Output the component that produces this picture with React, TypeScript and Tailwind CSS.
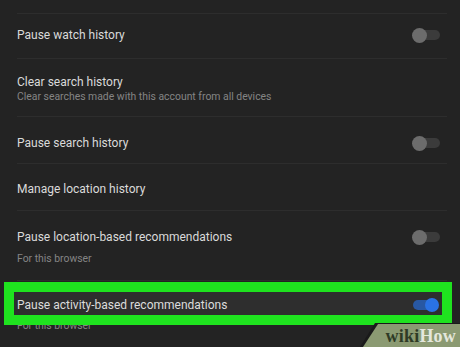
import React from "react";

type Row = {
  title: string;
  subtitle?: string;
  toggle?: "off" | "on";
  height: string;
  pad: string;
  gap?: string;
  last?: boolean;
};

const rows: Row[] = [
  { title: "Pause watch history", toggle: "off", height: "h-[45px]", pad: "pt-[13px]" },
  {
    title: "Clear search history",
    subtitle: "Clear searches made with this account from all devices",
    height: "h-[58px]",
    pad: "pt-[15px]",
    gap: "mt-0",
  },
  { title: "Pause search history", toggle: "off", height: "h-[47px]", pad: "pt-[18px]" },
  { title: "Manage location history", height: "h-[47px]", pad: "pt-[17px]" },
  {
    title: "Pause location-based recommendations",
    subtitle: "For this browser",
    toggle: "off",
    height: "h-[70px]",
    pad: "pt-[18px]",
    gap: "mt-[7px]",
  },
  {
    title: "Pause activity-based recommendations",
    subtitle: "For this browser",
    toggle: "on",
    height: "h-[67px]",
    pad: "pt-[16px]",
    gap: "mt-[6px]",
    last: true,
  },
];

const Toggle = ({ on }: { on: boolean }) => {
  if (on) {
    return (
      <div className="relative w-[28px] h-[14px] mr-[8px]">
        <div className="absolute left-[2px] top-[2px] w-[22px] h-[10px] rounded-full bg-[#1d4f9e]" />
        <div className="absolute right-0 top-0 w-[14px] h-[14px] rounded-full bg-[#1f6be3]" />
      </div>
    );
  }
  return (
    <div className="relative w-[28px] h-[15px] mr-[7px]">
      <div className="absolute left-[6px] top-[2.5px] w-[22px] h-[10px] rounded-full bg-[#3b3b3b]" />
      <div className="absolute left-0 top-0 w-[15px] h-[15px] rounded-full bg-[#6c6c6c]" />
    </div>
  );
};

export default function App() {
  return (
    <div
      className="relative w-[460px] h-[347px] overflow-hidden bg-[#232323]"
      style={{ fontFamily: "Roboto, 'Liberation Sans', sans-serif" }}
    >
      <div className="pl-[17px] pr-[13px]">
        <div className="h-[14px] border-b border-[#2d2d2d]" />
        {rows.map((r) => (
          <div
            key={r.title}
            className={`${r.height} ${r.pad} ${r.last ? "" : "border-b border-[#2d2d2d]"}`}
          >
            <div className="flex items-center justify-between h-[16px]">
              <span className="text-[12px] leading-[16px] text-[#dadada]">{r.title}</span>
              {r.toggle && <Toggle on={r.toggle === "on"} />}
            </div>
            {r.subtitle && (
              <div className={`${r.gap} text-[10.4px] leading-[14px] text-[#858585]`}>
                {r.subtitle}
              </div>
            )}
          </div>
        ))}
      </div>

      {/* highlight box */}
      <div className="absolute left-[4px] top-[282px] w-[448px] h-[43px] border-[10px] border-[#1fe31f] bg-white/[0.05]" />

      {/* watermark */}
      <div className="absolute right-0 bottom-0 w-[100px] h-[24px] bg-[#1a1a1a] [clip-path:polygon(15px_0,100%_0,100%_100%,0_100%)]" />
      <div className="absolute right-0 bottom-0 w-[97px] h-[23px] bg-[#8b9a72] [clip-path:polygon(15px_0,100%_0,100%_100%,0_100%)] flex items-center justify-end pr-[4px]">
        <span
          className="text-[18px] leading-none font-bold tracking-[0.2px]"
          style={{ fontFamily: "'Liberation Serif', serif" }}
        >
          <span className="text-[#2f3a25]">wiki</span>
          <span className="text-[#e4e7dc]">How</span>
        </span>
      </div>
    </div>
  );
}
